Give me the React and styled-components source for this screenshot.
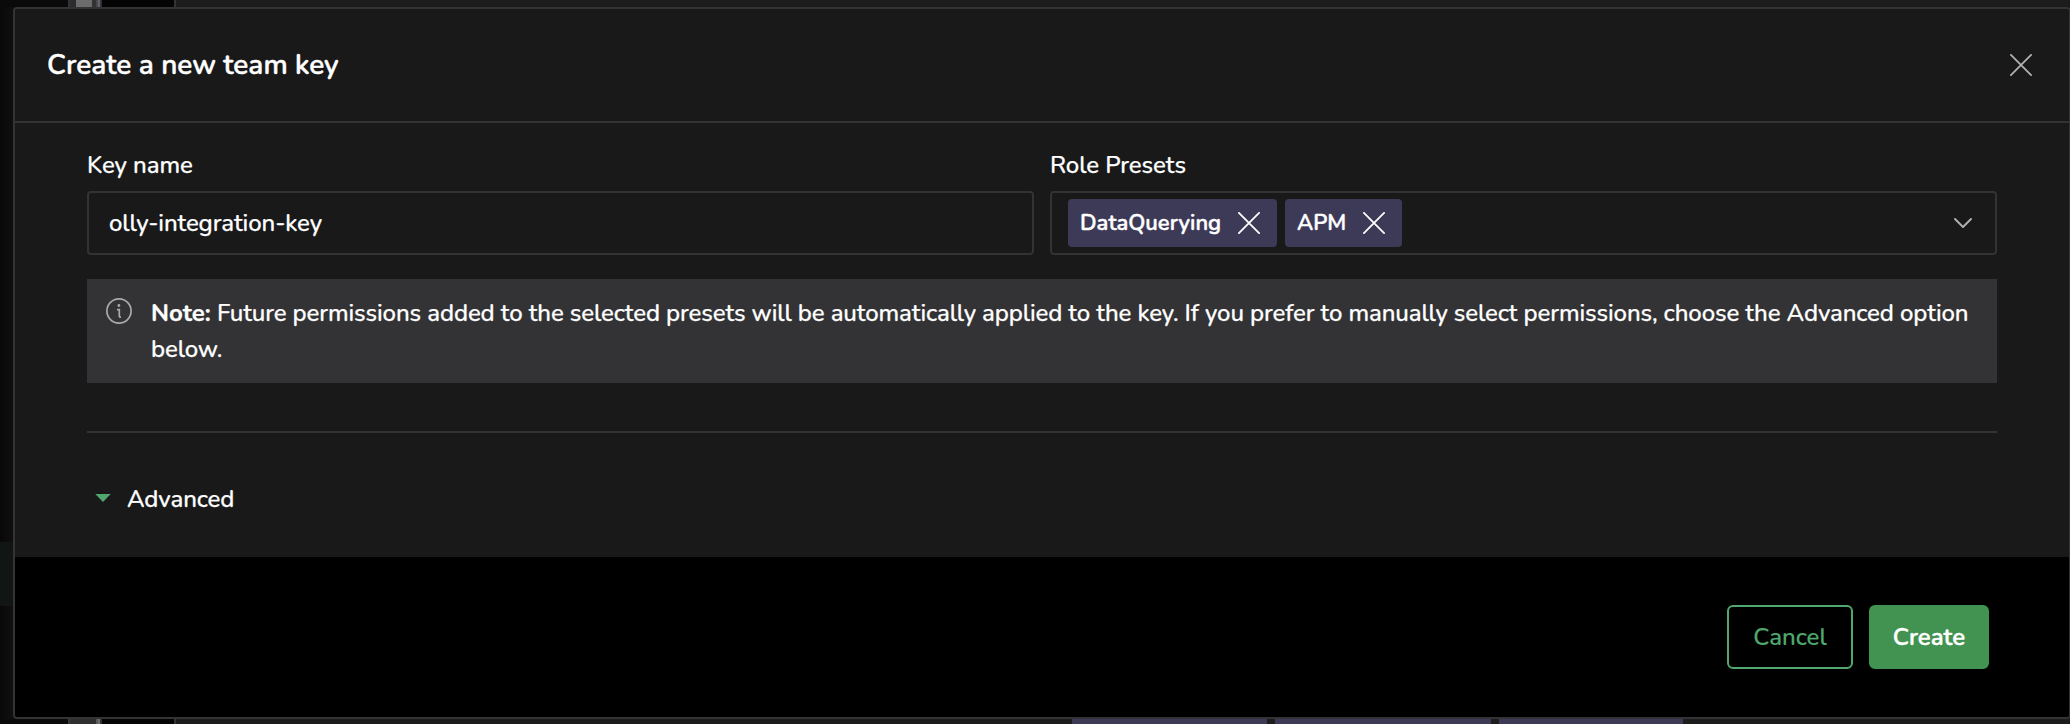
import React from "react";
import styled, { createGlobalStyle } from "styled-components";

const GlobalStyle = createGlobalStyle`
  *, *::before, *::after { box-sizing: border-box; }
  body {
    margin: 0;
    overflow: hidden;
    background: #0d0d0e;
    color: #fff;
    font-family: Nunito, Lato, "Open Sans", sans-serif;
    font-size: 24px;
    font-weight: 500;
    line-height: 36px;
    letter-spacing: -0.1px;
    -webkit-text-stroke: 0.25px currentColor;
  }
  svg { display: block; flex: none; }
`;

const Page = styled.div`
  display: grid;
  grid-template-columns: 13px 1fr;
  grid-template-rows: 7px 712px 5px;
  width: 100vw;
  height: 724px;
  overflow: hidden;
`;

const Strip = styled.div`
  grid-column: 1 / -1;
  display: flex;
  background: #1c1c1d;
`;

const Segment = styled.div`
  flex: none;
  width: ${(p) => p.$w}px;
  background: ${(p) => p.$c};
`;

const SideStrip = styled.div`
  display: flex;
  flex-direction: column;
  padding-top: 535px;
  background: linear-gradient(90deg, #080809, #101011);
`;

const SideHighlight = styled.div`
  height: 64px;
  background: #111513;
`;

const Dialog = styled.section`
  width: 2058px;
  height: 712px;
  display: flex;
  flex-direction: column;
  border: 2px solid #333335;
  border-radius: 4px;
  background: #19191a;
  overflow: hidden;
`;

const Header = styled.header`
  display: flex;
  align-items: center;
  justify-content: space-between;
  height: 114px;
  padding: 0 37px 0 32px;
  border-bottom: 2px solid #333335;
`;

const Title = styled.h1`
  margin: 0;
  font-size: 28px;
  font-weight: 600;
  letter-spacing: 0;
  -webkit-text-stroke-width: 0.45px;
`;

const IconButton = styled.button`
  display: flex;
  padding: 0;
  border: 0;
  background: none;
  color: ${(p) => p.$color || "#fff"};
`;

const Body = styled.div`
  height: 434px;
  padding: 24px 72px 0;
`;

const Fields = styled.div`
  display: grid;
  grid-template-columns: 1fr 1fr;
  gap: 16px;
`;

const Field = styled.div`
  display: flex;
  flex-direction: column;
  gap: 8px;
`;

const Label = styled.label`
  letter-spacing: -0.05px;
`;

const Control = styled.div`
  display: flex;
  align-items: center;
  gap: 8px;
  height: 64px;
  padding: 0 ${(p) => p.$right || 20}px 0 ${(p) => p.$left || 20}px;
  border: 2px solid #333335;
  border-radius: 4px;
`;

const TextInput = styled.input`
  width: 100%;
  height: 36px;
  padding: 0;
  border: 0;
  outline: 0;
  background: none;
  color: inherit;
  font: inherit;
  letter-spacing: inherit;
`;

const Tag = styled.span`
  display: flex;
  align-items: center;
  justify-content: space-between;
  width: ${(p) => p.$w}px;
  height: 48px;
  padding: 0 17px 0 12px;
  border-radius: 4px;
  background: #3d3a58;
  font-size: 22px;
  font-weight: 600;
  letter-spacing: 0.02px;
  -webkit-text-stroke-width: 0.45px;
`;

const Spacer = styled.span`
  flex: 1;
`;

const Note = styled.div`
  display: flex;
  align-items: flex-start;
  gap: 19px;
  margin-top: 24px;
  padding: 16px 16px 16px 19px;
  background: #333335;
`;

const NoteIcon = styled.span`
  padding-top: 3px;
`;

const NoteText = styled.p`
  margin: 0;

  strong {
    font-weight: 700;
    letter-spacing: 0;
  }
`;

const Divider = styled.hr`
  height: 2px;
  margin: 48px 0;
  border: 0;
  background: #333335;
`;

const Disclosure = styled.div`
  display: flex;
  align-items: center;
  gap: 16px;
  padding-left: 8px;
`;

const Footer = styled.footer`
  display: flex;
  align-items: center;
  justify-content: flex-end;
  gap: 16px;
  height: 160px;
  padding-right: 80px;
  background: #000;
`;

const Button = styled.button`
  width: ${(p) => p.$w}px;
  height: 64px;
  padding: 0;
  border: 2px solid ${(p) => (p.$primary ? "#429351" : "#51a86f")};
  border-radius: 6px;
  background: ${(p) => (p.$primary ? "#429351" : "transparent")};
  color: ${(p) => (p.$primary ? "#fff" : "#51a86f")};
  font: inherit;
  font-weight: ${(p) => (p.$primary ? 600 : 500)};
  letter-spacing: 0;
  -webkit-text-stroke: ${(p) => (p.$primary ? 0.45 : 0.2)}px currentColor;
`;

const topSegments = [
  [68, "#0a0a0b"], [2, "#333335"], [6, "#2c2c2e"], [16, "#6c6c6c"], [4, "#333334"],
  [2, "#48484a"], [2, "#646468"], [2, "#333335"], [72, "#040404"], [2, "#333335"],
];

const bottomSegments = [
  [68, "#0a0a0b"], [2, "#39393b"], [26, "#2f2f30"], [2, "#58585a"], [2, "#6c6c6e"],
  [2, "#333335"], [72, "#040404"], [2, "#333335"], [896, "#1c1c1d"], [195, "#3d3a55"],
  [8, "#1c1c1d"], [216, "#3d3a55"], [8, "#1c1c1d"], [184, "#3d3a55"],
];

const Segments = ({ items }) => (
  <Strip>
    {items.map(([w, c], i) => (
      <Segment key={i} $w={w} $c={c} />
    ))}
  </Strip>
);

const Cross = () => (
  <svg width="22" height="22" viewBox="0 0 22 22" fill="none" stroke="currentColor" strokeWidth="1.8" strokeLinecap="round">
    <path d="M0.9 0.9 21.1 21.1M21.1 0.9 0.9 21.1" />
  </svg>
);

const Chevron = () => (
  <svg width="18" height="10" viewBox="0 0 18 10" fill="none" stroke="#b0b0b1" strokeWidth="1.9" strokeLinecap="round" strokeLinejoin="round">
    <path d="M1 1 9 9 17 1" />
  </svg>
);

const Info = () => (
  <svg width="26" height="26" viewBox="0 0 26 26" fill="none" stroke="#aaaaab" strokeWidth="1.7">
    <circle cx="13" cy="13" r="12.1" />
    <path d="M11 11.7H13.3V18.2Q13.3 19.2 15 19.2" />
    <circle cx="12.9" cy="7.5" r="1.4" fill="#aaaaab" stroke="none" />
  </svg>
);

const Caret = () => (
  <svg width="16" height="10" viewBox="0 0 16 10" fill="#51a86f">
    <path d="M0.3 0H15.7L8 8Z" />
  </svg>
);

export default function App() {
  return (
    <>
      <GlobalStyle />
      <Page>
        <Segments items={topSegments} />
        <SideStrip>
          <SideHighlight />
        </SideStrip>
        <Dialog role="dialog">
          <Header>
            <Title>Create a new team key</Title>
            <IconButton $color="#b0b0b1" aria-label="Close">
              <Cross />
            </IconButton>
          </Header>
          <Body>
            <Fields>
              <Field>
                <Label htmlFor="key-name">Key name</Label>
                <Control>
                  <TextInput id="key-name" defaultValue="olly-integration-key" />
                </Control>
              </Field>
              <Field>
                <Label>Role Presets</Label>
                <Control $left={16} $right={23}>
                  <Tag $w={209}>
                    DataQuerying
                    <IconButton aria-label="Remove DataQuerying"><Cross /></IconButton>
                  </Tag>
                  <Tag $w={117}>
                    APM
                    <IconButton aria-label="Remove APM"><Cross /></IconButton>
                  </Tag>
                  <Spacer />
                  <Chevron />
                </Control>
              </Field>
            </Fields>
            <Note>
              <NoteIcon><Info /></NoteIcon>
              <NoteText>
                <strong>Note:</strong> Future permissions added to the selected presets will be automatically applied to the key. If you prefer to manually select permissions, choose the Advanced option below.
              </NoteText>
            </Note>
            <Divider />
            <Disclosure>
              <Caret />
              Advanced
            </Disclosure>
          </Body>
          <Footer>
            <Button $w={126}>Cancel</Button>
            <Button $w={120} $primary>Create</Button>
          </Footer>
        </Dialog>
        <Segments items={bottomSegments} />
      </Page>
    </>
  );
}
